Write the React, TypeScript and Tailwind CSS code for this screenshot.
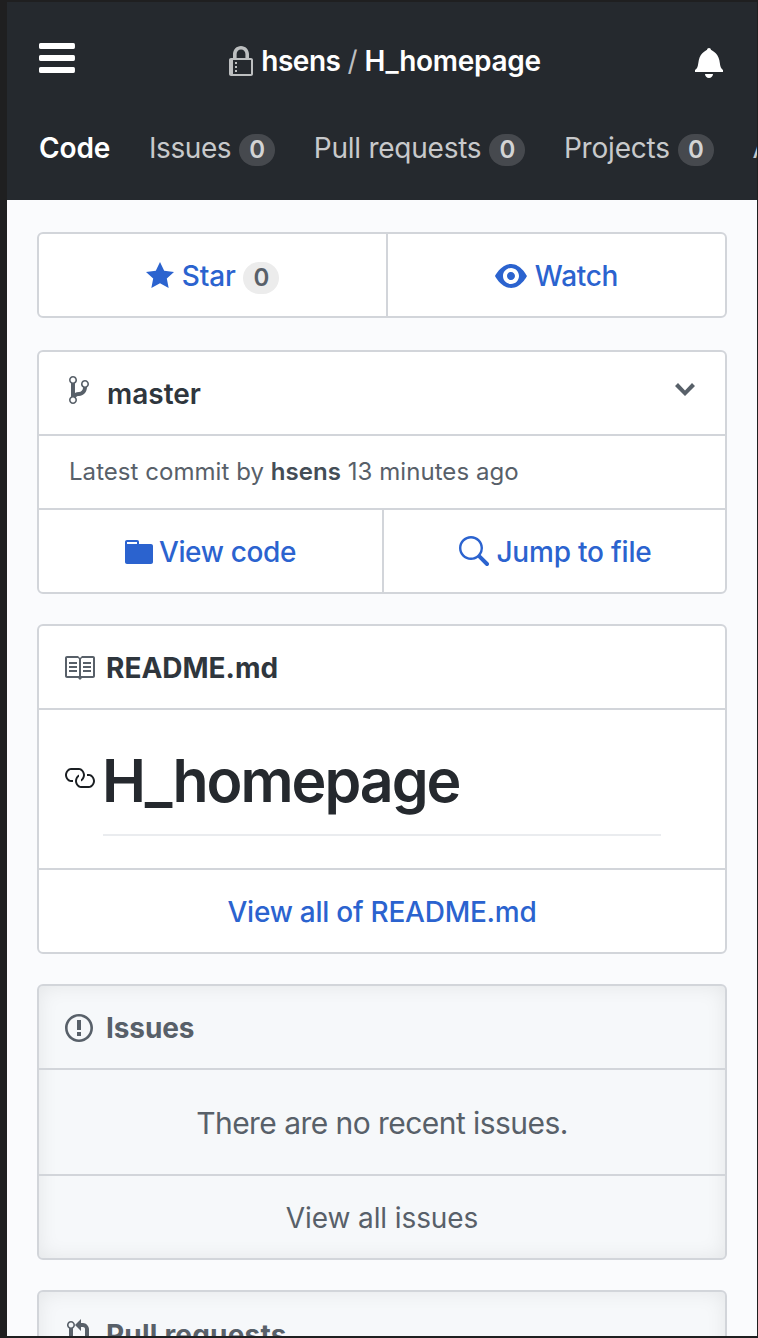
import type { ReactNode } from "react";

const paths = {
  bars: "M11.41 9H.59C0 9 0 8.59 0 8c0-.59 0-1 .59-1H11.4c.59 0 .59.41.59 1 0 .59 0 1-.59 1h.01zm0-4H.59C0 5 0 4.59 0 4c0-.59 0-1 .59-1H11.4c.59 0 .59.41.59 1 0 .59 0 1-.59 1h.01zM.59 11H11.4c.59 0 .59.41.59 1 0 .59 0 1-.59 1H.59C0 13 0 12.59 0 12c0-.59 0-1 .59-1z",
  lock: "M4 13H3v-1h1v1zm8-6v7c0 .55-.45 1-1 1H1c-.55 0-1-.45-1-1V7c0-.55.45-1 1-1h1V4c0-2.2 1.8-4 4-4s4 1.8 4 4v2h1c.55 0 1 .45 1 1zM3.8 6h4.41V4c0-1.22-.98-2.2-2.2-2.2-1.22 0-2.2.98-2.2 2.2v2H3.8zM11 7H2v7h9V7zM4 8H3v1h1V8zm0 2H3v1h1v-1z",
  bell: "M14 12v1H0v-1l.73-.58c.77-.77.81-2.55 1.19-4.42C2.69 3.23 6 2 6 2c0-.55.45-1 1-1s1 .45 1 1c0 0 3.39 1.23 4.16 5 .38 1.88.42 3.66 1.19 4.42l.66.58H14zm-7 4c1.11 0 2-.89 2-2H5c0 1.11.89 2 2 2z",
  star: "M14 6l-4.9-.64L7 1 4.9 5.36 0 6l3.6 3.26L2.67 14 7 11.67 11.33 14l-.93-4.74L14 6z",
  eye: "M8.06 2C3 2 0 8 0 8s3 6 8.06 6C13 14 16 8 16 8s-3-6-7.94-6zM8 12c-2.2 0-4-1.78-4-4 0-2.2 1.8-4 4-4 2.22 0 4 1.8 4 4 0 2.22-1.78 4-4 4zm2-4c0 1.11-.89 2-2 2-1.11 0-2-.89-2-2 0-1.11.89-2 2-2 1.11 0 2 .89 2 2z",
  branch: "M10 5c0-1.11-.89-2-2-2a1.993 1.993 0 0 0-1 3.72v.3c-.02.52-.23.98-.63 1.38-.4.4-.86.61-1.38.63-.83.02-1.48.16-2 .45V4.72a1.993 1.993 0 0 0-1-3.72C.88 1 0 1.89 0 3a2 2 0 0 0 1 1.72v6.56c-.59.35-1 .99-1 1.72 0 1.11.89 2 2 2 1.11 0 2-.89 2-2 0-.53-.2-1-.53-1.36.09-.06.48-.41.59-.47.25-.11.56-.17.94-.17 1.05-.05 1.95-.45 2.75-1.25S8.95 7.77 9 6.73h-.02C9.59 6.37 10 5.73 10 5zM2 1.8c.66 0 1.2.55 1.2 1.2 0 .65-.55 1.2-1.2 1.2C1.35 4.2.8 3.65.8 3c0-.65.55-1.2 1.2-1.2zm0 12.41c-.66 0-1.2-.55-1.2-1.2 0-.65.55-1.2 1.2-1.2.65 0 1.2.55 1.2 1.2 0 .65-.55 1.2-1.2 1.2zm6-8c-.66 0-1.2-.55-1.2-1.2 0-.65.55-1.2 1.2-1.2.65 0 1.2.55 1.2 1.2 0 .65-.55 1.2-1.2 1.2z",
  chevron: "M5 11L0 6l1.5-1.5L5 8.25 8.5 4.5 10 6l-5 5z",
  folder: "M13 4H7V3c0-.66-.31-1-1-1H1c-.55 0-1 .45-1 1v10c0 .55.45 1 1 1h12c.55 0 1-.45 1-1V5c0-.55-.45-1-1-1zM6 4H1V3h5v1z",
  search: "M15.7 13.3l-3.81-3.83A5.93 5.93 0 0 0 13 6c0-3.31-2.69-6-6-6S1 2.69 1 6s2.69 6 6 6c1.3 0 2.48-.41 3.47-1.11l3.83 3.81c.19.2.45.3.7.3.25 0 .52-.09.7-.3a.996.996 0 0 0 0-1.41v.01zM7 10.8c-2.65 0-4.8-2.15-4.8-4.8S4.35 1.2 7 1.2s4.8 2.15 4.8 4.8-2.15 4.8-4.8 4.8z",
  book: "M3 5h4v1H3V5zm0 3h4V7H3v1zm0 2h4V9H3v1zm11-5h-4v1h4V5zm0 2h-4v1h4V7zm0 2h-4v1h4V9zm2-6v9c0 .55-.45 1-1 1H9.5l-1 1-1-1H2c-.55 0-1-.45-1-1V3c0-.55.45-1 1-1h5.5l1 1 1-1H15c.55 0 1 .45 1 1zm-8 .5L7.5 3H2v9h6V3.5zm7-.5H9.5l-.5.5V12h6V3z",
  link: "M4 9h1v1H4c-1.5 0-3-1.69-3-3.5S2.55 3 4 3h4c1.45 0 3 1.69 3 3.5 0 1.41-.91 2.72-2 3.25V8.59c.58-.45 1-1.27 1-2.09C10 5.22 8.98 4 8 4H4c-.98 0-2 1.22-2 2.5S3 9 4 9zm9-3h-1v1h1c1 0 2 1.22 2 2.5S13.98 12 13 12H9c-.98 0-2-1.22-2-2.5 0-.83.42-1.64 1-2.09V6.25c-1.09.53-2 1.84-2 3.25C6 11.31 7.55 13 9 13h4c1.45 0 3-1.69 3-3.5S14.5 6 13 6z",
  issue: "M7 2.3c3.14 0 5.7 2.56 5.7 5.7s-2.56 5.7-5.7 5.7A5.71 5.71 0 0 1 1.3 8c0-3.14 2.56-5.7 5.7-5.7zM7 1C3.14 1 0 4.14 0 8s3.14 7 7 7 7-3.14 7-7-3.14-7-7-7zm1 3H6v5h2V4zm0 6H6v2h2v-2z",
  pull: "M11 11.28V5c-.03-.78-.34-1.47-.94-2.06C9.46 2.35 8.78 2.03 8 2H7V0L4 3l3 3V4h1c.27.02.48.11.69.31.21.2.3.42.31.69v6.28A1.993 1.993 0 0 0 10 15a1.993 1.993 0 0 0 1-3.72zm-1 2.92c-.66 0-1.2-.55-1.2-1.2 0-.65.55-1.2 1.2-1.2.65 0 1.2.55 1.2 1.2 0 .65-.55 1.2-1.2 1.2zM4 3c0-1.11-.89-2-2-2a1.993 1.993 0 0 0-1 3.72v6.56A1.993 1.993 0 0 0 2 15a1.993 1.993 0 0 0 1-3.72V4.72c.59-.34 1-.98 1-1.72zm-.8 10c0 .66-.55 1.2-1.2 1.2-.65 0-1.2-.55-1.2-1.2 0-.65.55-1.2 1.2-1.2.65 0 1.2.55 1.2 1.2zM2 4.2C1.34 4.2.8 3.65.8 3c0-.65.55-1.2 1.2-1.2.65 0 1.2.55 1.2 1.2 0 .65-.55 1.2-1.2 1.2z",
};

function Icon({ name, w, scale = 2, className = "" }: { name: keyof typeof paths; w: number; scale?: number; className?: string }) {
  return (
    <svg className={`shrink-0 ${className}`} width={w * scale} height={16 * scale} viewBox={`0 0 ${w} 16`} fill="currentColor" fillRule="evenodd" aria-hidden="true">
      <path d={paths[name]} />
    </svg>
  );
}

function Counter({ className }: { className: string }) {
  return <span className={`flex h-8 w-9 items-center justify-center rounded-full text-2xl font-semibold ${className}`}>0</span>;
}

function Tab({ label, className }: { label: string; className: string }) {
  return (
    <a className="flex items-center gap-2 text-[#c8c9cb]">
      <span className={`whitespace-nowrap ${className}`}>{label}</span>
      <Counter className="mt-1 bg-[#46494e] text-[#d3d4d5]" />
    </a>
  );
}

function Card({ children, muted = false }: { children: ReactNode; muted?: boolean }) {
  return (
    <section
      className={`shrink-0 divide-y-2 divide-[#d2d5da] rounded-md border-2 border-[#d2d5da] ${
        muted ? "bg-[#f6f8fa] text-[#586069] shadow-[inset_0_0_20px_rgba(0,0,0,0.08)]" : "bg-white text-[#586069]"
      }`}
    >
      {children}
    </section>
  );
}

export default function App() {
  return (
    <div className="h-[1338px] w-[758px] overflow-hidden bg-[#1f1f20] pt-0.5 pr-px pb-0.5 pl-[7px] font-['Inter',sans-serif] text-[28px] leading-[42px]">
      <div className="flex h-full flex-col overflow-hidden bg-[#fafbfd]">
        <header className="h-[198px] shrink-0 bg-[#25292e] text-white">
          <div className="flex items-start justify-between pt-8 pr-[34px] pl-8">
            <Icon name="bars" w={12} scale={3} />
            <h1 className="flex pt-1.5 font-semibold">
              <Icon name="lock" w={12} className="mt-1.5 mr-2 text-[#bdbfc0]" />
              <span className="tracking-[-0.5px]">hsens</span>
              <span className="mx-[7px] font-normal text-[#bdbfc0]">/</span>
              <span className="tracking-[-0.3px]">H_homepage</span>
            </h1>
            <Icon name="bell" w={14} className="mt-3" />
          </div>
          <nav className="mt-[45px] flex items-center gap-[38.6px] pl-8">
            <a className="font-semibold tracking-[-0.1px]">Code</a>
            <Tab label="Issues" className="tracking-[-0.4px]" />
            <Tab label="Pull requests" className="tracking-[-0.25px]" />
            <Tab label="Projects" className="tracking-[-0.2px]" />
            <a className="text-[#c8c9cb]">Actions</a>
          </nav>
        </header>
        <main className="flex flex-col px-[30px] pt-8">
          <Card>
            <div className="flex h-[82px] divide-x-2 divide-[#d2d5da] font-medium text-[#2b63cf]">
              <a className="flex w-[349px] items-center justify-center pt-0.5">
                <Icon name="star" w={14} className="mr-2" />
                <span className="tracking-[-0.1px]">Star</span>
                <Counter className="mt-1 ml-[7.5px] bg-[#ececec] text-[#586069]" />
              </a>
              <a className="flex flex-1 items-center justify-center pt-0.5">
                <Icon name="eye" w={16} className="mr-2" />
                <span className="tracking-[-0.3px]">Watch</span>
              </a>
            </div>
          </Card>
          <div className="h-8" />
          <Card>
            <div className="flex h-[84px] items-start pt-[22px] pr-[30px] pl-[30px]">
              <Icon name="branch" w={10} />
              <span className="-mt-px ml-[18px] font-semibold text-[#2f363d]">master</span>
              <Icon name="chevron" w={10} className="ml-auto" />
            </div>
            <p className="flex h-[74px] items-center pl-[30px] text-2xl">
              <span className="tracking-[0.05px] whitespace-pre">Latest commit by <b className="font-semibold text-[#444d56]">hsens</b> 13 minutes ago</span>
            </p>
            <div className="flex h-[82px] divide-x-2 divide-[#d2d5da] font-medium text-[#2b63cf]">
              <a className="flex w-[345px] items-center justify-center pt-0.5">
                <Icon name="folder" w={14} className="mr-1.5" />
                <span className="tracking-[-0.35px]">View code</span>
              </a>
              <a className="flex flex-1 items-center justify-center pt-0.5">
                <Icon name="search" w={16} className="mr-[7px]" />
                <span className="tracking-[-0.2px]">Jump to file</span>
              </a>
            </div>
          </Card>
          <div className="h-[30px]" />
          <Card>
            <h2 className="flex h-[84px] items-center pt-0.5 pl-6 font-bold">
              <Icon name="book" w={16} className="mr-[11px]" />
              <span className="text-[#2f363d]">README.md</span>
            </h2>
            <div className="flex h-40 items-start pt-9 pl-6">
              <Icon name="link" w={16} className="mt-4 text-[#1b1f23]" />
              <h1 className="ml-2 h-[90px] w-[558px] border-b-2 border-[#eaecef] text-[59px] leading-[69px] font-semibold text-[#25292e]">
                <span className="-ml-px tracking-[-2px]">H_homepage</span>
              </h1>
            </div>
            <a className="flex h-[82px] items-center justify-center pt-0.5 font-medium tracking-[-0.25px] text-[#2b63cf]">View all of README.md</a>
          </Card>
          <div className="h-[30px]" />
          <Card muted>
            <h2 className="flex h-[84px] items-center pt-0.5 pl-[26px] font-bold">
              <Icon name="issue" w={14} className="mr-[13px]" />
              <span className="tracking-[-0.1px]">Issues</span>
            </h2>
            <p className="flex h-[106px] items-center justify-center pt-0.5 text-[30px] tracking-[-0.55px]">There are no recent issues.</p>
            <a className="flex h-[82px] items-center justify-center pt-0.5 tracking-[-0.1px]">View all issues</a>
          </Card>
          <div className="h-[30px]" />
          <Card muted>
            <h2 className="flex h-[84px] items-center pt-0.5 pl-7 font-bold">
              <Icon name="pull" w={12} className="mr-[15px]" />
              <span className="tracking-[0.2px]">Pull requests</span>
            </h2>
          </Card>
        </main>
      </div>
    </div>
  );
}
